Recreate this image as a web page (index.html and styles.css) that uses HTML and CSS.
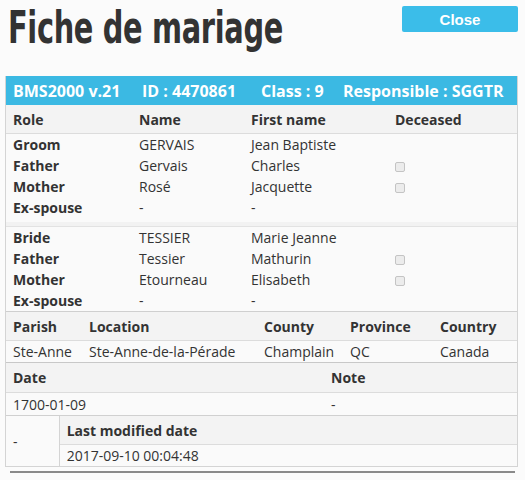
FILE: index.html
```html
<!DOCTYPE html>
<html lang="fr">
<head>
    <meta charset="UTF-8">
    <meta name="viewport" content="width=device-width, initial-scale=1.0">
    <title>Fiche de mariage</title>
    <link rel="stylesheet" href="styles.css">
</head>
<body>

    <div class="top">
        <h1>Fiche de mariage</h1>
        <button class="close-btn" type="button">Close</button>
    </div>

    <div class="record">
        <div class="record-head">
            <span class="version">BMS2000 v.21</span>
            <span class="id">ID : 4470861</span>
            <span class="class">Class : 9</span>
            <span>Responsible : SGGTR</span>
        </div>

        <table class="people groom">
            <thead>
                <tr><th>Role</th><th>Name</th><th>First name</th><th>Deceased</th></tr>
            </thead>
            <tbody>
                <tr><th>Groom</th><td>GERVAIS</td><td>Jean Baptiste</td><td></td></tr>
                <tr><th>Father</th><td>Gervais</td><td>Charles</td><td><input type="checkbox" disabled></td></tr>
                <tr><th>Mother</th><td>Rosé</td><td>Jacquette</td><td><input type="checkbox" disabled></td></tr>
                <tr><th>Ex-spouse</th><td>-</td><td>-</td><td></td></tr>
            </tbody>
        </table>

        <table class="people bride">
            <tbody>
                <tr><th>Bride</th><td>TESSIER</td><td>Marie Jeanne</td><td></td></tr>
                <tr><th>Father</th><td>Tessier</td><td>Mathurin</td><td><input type="checkbox" disabled></td></tr>
                <tr><th>Mother</th><td>Etourneau</td><td>Elisabeth</td><td><input type="checkbox" disabled></td></tr>
                <tr><th>Ex-spouse</th><td>-</td><td>-</td><td></td></tr>
            </tbody>
        </table>

        <table class="grid place">
            <thead>
                <tr><th>Parish</th><th>Location</th><th>County</th><th>Province</th><th>Country</th></tr>
            </thead>
            <tbody>
                <tr><td>Ste-Anne</td><td>Ste-Anne-de-la-Pérade</td><td>Champlain</td><td>QC</td><td>Canada</td></tr>
            </tbody>
        </table>

        <table class="grid dates">
            <thead>
                <tr><th>Date</th><th>Note</th></tr>
            </thead>
            <tbody>
                <tr><td>1700-01-09</td><td>-</td></tr>
            </tbody>
        </table>

        <div class="meta">
            <div class="meta-left">-</div>
            <table class="grid modified">
                <thead>
                    <tr><th>Last modified date</th></tr>
                </thead>
                <tbody>
                    <tr><td>2017-09-10 00:04:48</td></tr>
                </tbody>
            </table>
        </div>
    </div>

    <hr class="bottom-rule">

</body>
</html>
```

FILE: styles.css
```css
body {
    font-family: "Open Sans", Arial, sans-serif;
    font-size: 14px;
    color: #333;
    background-color: #fbfbfb;
    margin: 0;
    padding: 0 7px 0 5px;
}

.top {
    display: flex;
    justify-content: space-between;
    align-items: flex-start;
    height: 76px;
}

.top h1 {
    flex: 1;
    min-width: 0;
    font-family: "DejaVu Sans", sans-serif;
    font-weight: bold;
    font-size: 44px;
    letter-spacing: -0.5px;
    color: #333;
    margin: 4px 0 0 3px;
    line-height: 48px;
    white-space: nowrap;
    transform: scaleX(0.655);
    transform-origin: left top;
}

.close-btn {
    flex-shrink: 0;
    margin-top: 6px;
    width: 116px;
    height: 26px;
    background-color: #3bbde9;
    color: white;
    border: none;
    border-radius: 2px;
    font-family: "Liberation Sans", Arial, sans-serif;
    font-weight: bold;
    font-size: 15px;
    cursor: pointer;
}

.record {
    border: 1px solid #d4d4d4;
    border-top: none;
    background-color: #fafafa;
}

.record-head {
    display: flex;
    height: 29px;
    align-items: center;
    padding: 0 7px;
    background-color: #3bb9e3;
    color: white;
    font-weight: bold;
    font-size: 16px;
    white-space: nowrap;
}

.record-head .version { width: 129px; }
.record-head .id { width: 119px; }
.record-head .class { width: 82px; }

table {
    width: 100%;
    border-collapse: collapse;
}

th {
    text-align: left;
    font-weight: bold;
}

.people th,
.people td {
    padding: 0 7px;
    height: 21px;
    line-height: 21px;
}

.people thead th {
    height: 28px;
    background-color: #f3f3f3;
    border-bottom: 1px solid #dcdcdc;
}

.people th:nth-child(1) { width: 112px; }
.people td:nth-child(2),
.people th:nth-child(2) { width: 98px; }
.people td:nth-child(3),
.people th:nth-child(3) { width: 130px; }

.people input[type="checkbox"] {
    appearance: none;
    margin: 0;
    width: 10px;
    height: 10px;
    vertical-align: middle;
    background-color: #ececec;
    border: 1px solid #c4c4c4;
    border-radius: 2px;
}

.groom tbody tr:last-child td,
.groom tbody tr:last-child th {
    padding-bottom: 4px;
}

.groom {
    border-bottom: 4px solid #f2f2f2;
}

.bride {
    border-top: 1px solid #e2e2e2;
}

.grid th,
.grid td {
    padding: 0 7px;
}

.grid thead th {
    height: 28px;
    background-color: #f3f3f3;
    border-top: 1px solid #d6d6d6;
    border-bottom: 1px solid #dcdcdc;
}

.grid tbody td {
    height: 21px;
}

.place th:nth-child(1) { width: 62px; }
.place th:nth-child(2) { width: 161px; }
.place th:nth-child(3) { width: 72px; }
.place th:nth-child(4) { width: 76px; }

.place {
    border-bottom: 1px solid #c8c8c8;
}

.place thead th {
    border-top-color: #cfcfcf;
}

.dates th:nth-child(1) { width: 304px; }

.dates thead th {
    border-top: none;
    height: 29px;
}

.dates tbody td {
    height: 22px;
    border-bottom: 1px solid #d0d0d0;
}

.meta {
    display: flex;
}

.meta-left {
    width: 51px;
    padding-left: 7px;
    display: flex;
    align-items: center;
    border-right: 1px solid #d4d4d4;
}

.modified thead th {
    border-top: none;
}

.bottom-rule {
    border: none;
    border-top: 2px solid #8a8a8a;
    margin: 4px 3px 0 5px;
}
```
